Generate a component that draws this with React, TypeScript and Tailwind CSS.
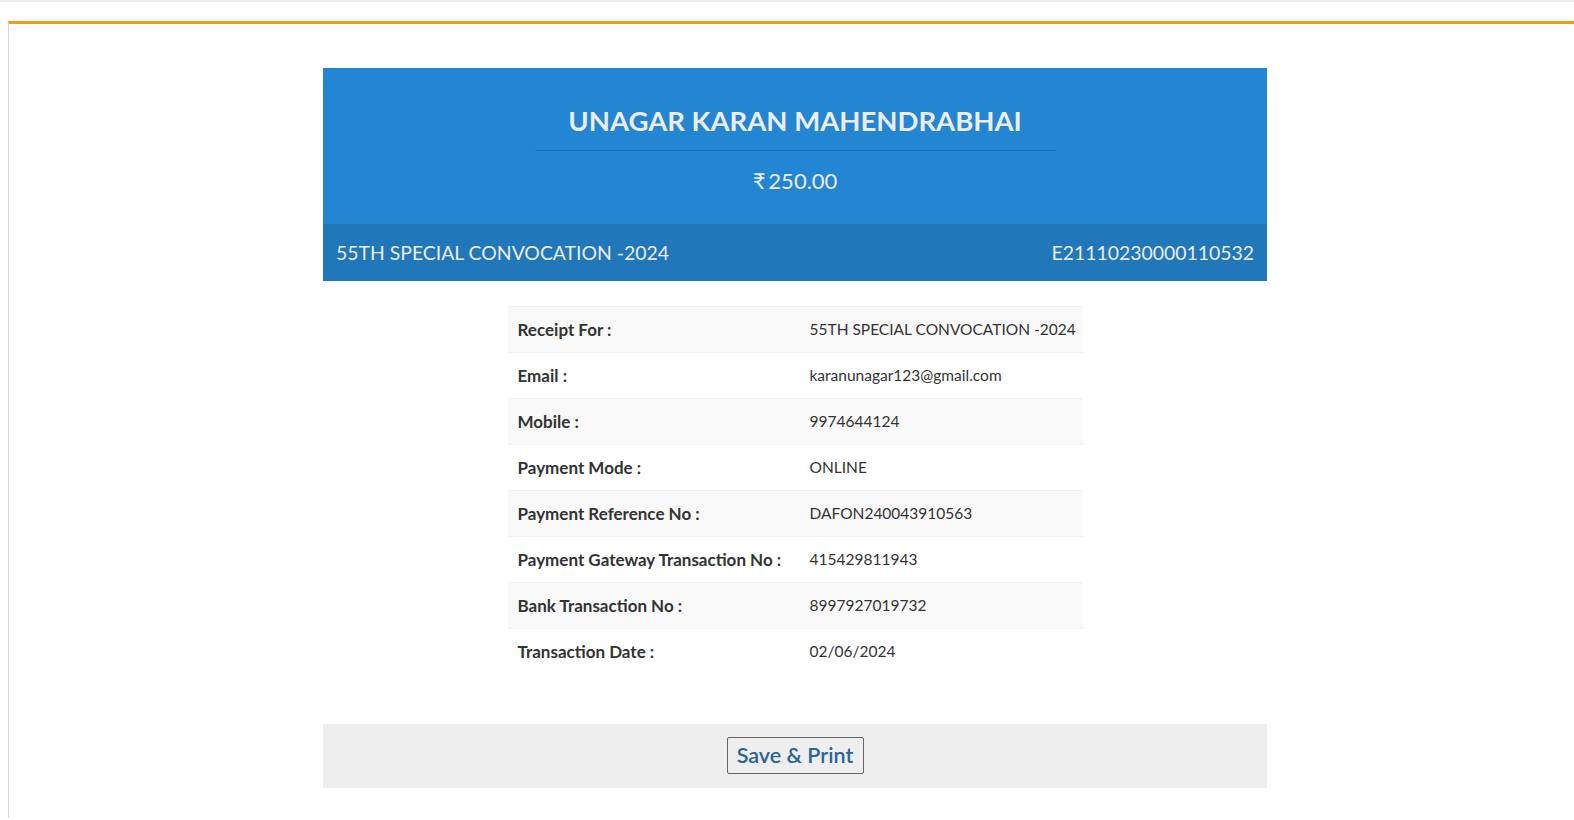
import React from "react";

const rows: [string, string][] = [
  ["Receipt For :", "55TH SPECIAL CONVOCATION -2024"],
  ["Email :", "karanunagar123@gmail.com"],
  ["Mobile :", "9974644124"],
  ["Payment Mode :", "ONLINE"],
  ["Payment Reference No :", "DAFON240043910563"],
  ["Payment Gateway Transaction No :", "415429811943"],
  ["Bank Transaction No :", "8997927019732"],
  ["Transaction Date :", "02/06/2024"],
];

export default function App() {
  return (
    <div
      className="min-h-[820px] w-full bg-white overflow-hidden"
      style={{ fontFamily: "Lato, 'Noto Sans', sans-serif" }}
    >
      <div className="h-[2px] bg-[#e9edf1]" />
      <div className="pt-[19px] pl-[8px]">
        <div className="border-t-[3px] border-l border-t-[#f39c12] border-l-[#d2d6de] min-h-[797px] bg-white -mr-4">
          <div className="w-[944px] ml-[314px] pt-[44px]">
            <div className="bg-[#2386d3] h-[156px] flex flex-col items-center pt-[33px]">
              <div className="text-[27.5px] font-bold text-[#ececec] leading-[40px]">
                UNAGAR KARAN MAHENDRABHAI
              </div>
              <div className="w-[521px] h-px bg-[#1f74b6] mt-[9px]" />
              <div className="text-[22px] text-[#ececec] mt-[15px] leading-[30px]">
                ₹<span className="ml-[3px]">250.00</span>
              </div>
            </div>
            <div className="bg-[#2077ba] h-[57px] flex items-center justify-between px-[13px] text-[19.4px] text-[#ececec]">
              <span>55TH SPECIAL CONVOCATION -2024</span>
              <span>E21110230000110532</span>
            </div>
            <div className="flex justify-center pt-[25px]">
              <table className="w-[575px] text-[#333] border-collapse">
                <tbody>
                  {rows.map(([k, v], i) => (
                    <tr
                      key={k}
                      className={`h-[46px] border-t border-[#f1f1f1] ${i % 2 === 0 ? "bg-[#f9f9f9]" : "bg-white"}`}
                    >
                      <td className="pl-[10px] w-[302px] font-bold text-[17px] whitespace-nowrap">{k}</td>
                      <td className="text-[15.5px] whitespace-nowrap">{v}</td>
                    </tr>
                  ))}
                </tbody>
              </table>
            </div>
            <div className="mt-[49px] bg-[#eeeeee] h-[64px] flex items-center justify-center">
              <button className="border border-[#666] rounded-[2px] h-[37px] w-[137px] pt-[1px] text-[21.5px] font-semibold text-[#2b6491] bg-transparent leading-none">
                Save &amp; Print
              </button>
            </div>
          </div>
        </div>
      </div>
    </div>
  );
}
